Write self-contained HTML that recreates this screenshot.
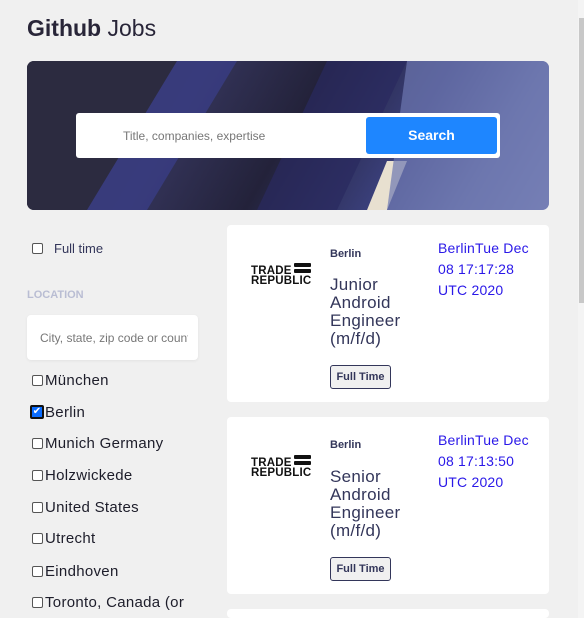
<!DOCTYPE html>
<html style="width:584px;height:618px;overflow:hidden"><head><style>
*{box-sizing:border-box;margin:0;padding:0}
body{width:584px;height:618px;overflow:hidden;background:#f0f0f0;font-family:"Liberation Sans",sans-serif;position:relative;color:#1d1d3a}
.abs{position:absolute}
h1{position:absolute;left:27px;top:15px;font-size:23px;font-weight:400;color:#282538}
h1 b{font-weight:700}
.hero{left:27px;top:61px;width:522px;height:149px;border-radius:7px;overflow:hidden;background:linear-gradient(120deg,#2a2940 0%,#34345a 30%,#23223a 50%,#3a3f7a 70%,#6a74a8 85%,#8890c0 100%)}
.sbox{left:76px;top:113px;width:424px;height:45px;background:#fff;border-radius:3px}
.btn{left:366px;top:117px;width:131px;height:37px;background:#1e86ff;border-radius:3px;color:#fff;font-weight:700;font-size:14px;text-align:center;line-height:37px}
.ph{left:123px;top:129px;font-size:12px;color:#777}
.cb{width:11px;height:11px;border:1px solid #555;border-radius:2px;background:#fff}
.loc{font-size:15px;color:#1d1d2a;letter-spacing:.3px}
.card{left:227px;width:322px;height:177px;background:#fff;border-radius:4px}
.logo{font-weight:900;font-size:11.5px;line-height:10px;color:#111;letter-spacing:.2px}
.city{font-weight:700;font-size:11px;color:#33365a}
.title{font-size:17px;line-height:18px;color:#33365a;letter-spacing:.3px}
.tag{width:61px;height:24px;border:1px solid #33365a;border-radius:3px;font-size:11px;font-weight:700;text-align:center;line-height:22px;color:#33365a;background:#f0f0f0}
.date{font-size:14px;line-height:21px;color:#2a18e8;letter-spacing:.2px}
</style></head><body>
<h1><b>Github</b> Jobs</h1>
<div class="abs hero">
<svg width="522" height="149" style="position:absolute;left:0;top:0">
<polygon points="0,0 150,0 60,149 0,149" fill="#2c2b40"/>
<polygon points="150,0 210,0 120,149 60,149" fill="#3a3d85" opacity=".8"/>
<polygon points="300,0 380,0 310,149 230,149" fill="#2a2a60" opacity=".7"/>
<polygon points="340,149 360,100 380,100 360,149" fill="#e8e0d0"/>
<polygon points="380,0 522,0 522,149 360,149" fill="#6d78b0" opacity=".7"/>
</svg></div>
<div class="abs sbox"></div>
<div class="abs ph">Title, companies, expertise</div>
<div class="abs btn">Search</div>

<div class="abs cb" style="left:32px;top:243px"></div>
<div class="abs" style="left:54px;top:241px;font-size:13px;color:#33365a">Full time</div>
<div class="abs" style="left:27px;top:289px;font-size:11px;font-weight:700;color:#b9bdd3">LOCATION</div>
<div class="abs" style="left:27px;top:315px;width:171px;height:45px;background:#fff;border-radius:4px;box-shadow:0 1px 3px rgba(0,0,0,.06)"></div>
<div class="abs" style="left:40px;top:331px;font-size:12px;color:#777;white-space:nowrap;width:148px;overflow:hidden">City, state, zip code or country</div>

<div class="abs cb" style="left:32px;top:375px"></div><div class="abs loc" style="left:45px;top:372px">München</div>
<div class="abs" style="left:30px;top:405px;width:14px;height:14px;background:#0a6cff;border:2px solid #111;border-radius:2px;color:#fff;font-size:10px;line-height:10px;text-align:center">✔</div><div class="abs loc" style="left:45px;top:404px">Berlin</div>
<div class="abs cb" style="left:32px;top:438px"></div><div class="abs loc" style="left:45px;top:435px">Munich Germany</div>
<div class="abs cb" style="left:32px;top:470px"></div><div class="abs loc" style="left:45px;top:467px">Holzwickede</div>
<div class="abs cb" style="left:32px;top:502px"></div><div class="abs loc" style="left:45px;top:499px">United States</div>
<div class="abs cb" style="left:32px;top:533px"></div><div class="abs loc" style="left:45px;top:530px">Utrecht</div>
<div class="abs cb" style="left:32px;top:566px"></div><div class="abs loc" style="left:45px;top:563px">Eindhoven</div>
<div class="abs cb" style="left:32px;top:597px"></div><div class="abs loc" style="left:45px;top:594px;white-space:nowrap">Toronto, Canada (or</div>

<div class="abs card" style="top:225px"></div>
<div class="abs logo" style="left:251px;top:266px">TRADE<br>REPUBLIC</div>
<div class="abs" style="left:294px;top:263px;width:17px;height:4px;background:#111;border-radius:1px"></div>
<div class="abs" style="left:294px;top:269px;width:17px;height:4px;background:#111;border-radius:1px"></div>
<div class="abs city" style="left:330px;top:248px">Berlin</div>
<div class="abs title" style="left:330px;top:276px">Junior<br>Android<br>Engineer<br>(m/f/d)</div>
<div class="abs tag" style="left:330px;top:365px">Full Time</div>
<div class="abs date" style="left:438px;top:238px">BerlinTue Dec<br>08 17:17:28<br>UTC 2020</div>

<div class="abs card" style="top:417px"></div>
<div class="abs logo" style="left:251px;top:458px">TRADE<br>REPUBLIC</div>
<div class="abs" style="left:294px;top:455px;width:17px;height:4px;background:#111;border-radius:1px"></div>
<div class="abs" style="left:294px;top:461px;width:17px;height:4px;background:#111;border-radius:1px"></div>
<div class="abs city" style="left:330px;top:439px">Berlin</div>
<div class="abs title" style="left:330px;top:468px">Senior<br>Android<br>Engineer<br>(m/f/d)</div>
<div class="abs tag" style="left:330px;top:557px">Full Time</div>
<div class="abs date" style="left:438px;top:430px">BerlinTue Dec<br>08 17:13:50<br>UTC 2020</div>

<div class="abs card" style="top:609px;height:9px"></div>
<div class="abs" style="left:578px;top:0;width:6px;height:618px;background:#f4f4f4"></div>
<div class="abs" style="left:579px;top:18px;width:5px;height:285px;background:#c8c8c8"></div>
</body></html>
